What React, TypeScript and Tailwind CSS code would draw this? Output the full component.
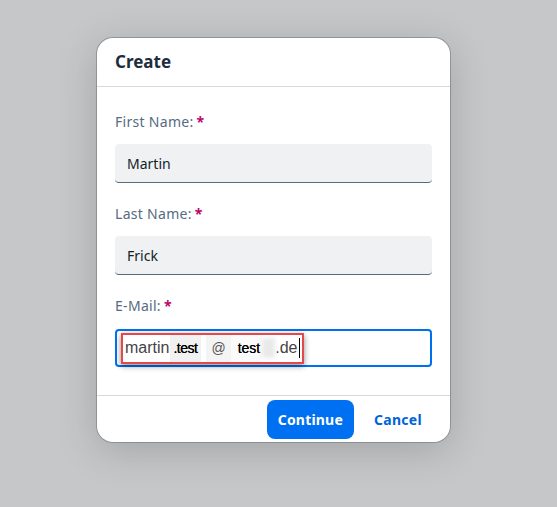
const Field = ({ label, value }: { label: string; value: string }) => (
  <div className="flex flex-col">
    <label className="h-[20px] text-[14px] leading-[20px] tracking-[0.3px] text-[#556b82]">
      {label}
      <span className="ml-[3px] align-top text-[14px] font-bold text-[#ba066c]">*</span>
    </label>
    <div className="mt-[12px] flex h-[39px] items-center rounded-[4px] border-b border-[#556b82] bg-[#eff1f2] px-[12px] text-[14px] text-[#131e29]">
      {value}
    </div>
  </div>
);

const App = () => {
  return (
    <div className="min-h-[507px] w-full bg-[#c6c7c9] pt-[38px] pl-[97px]" style={{ fontFamily: '"Noto Sans", Lato, sans-serif' }}>
      <div className="w-[353px] overflow-hidden rounded-[16px] bg-white shadow-[0_0_0_1px_rgba(70,80,90,0.35),0_8px_40px_rgba(0,0,0,0.18)]">
        {/* Kopf */}
        <header className="flex h-[49px] items-center border-b border-[#d9d9d9] px-[18px]">
          <h1 className="text-[17px] font-bold text-[#1d2d3e]">Create</h1>
        </header>

        {/* Formular */}
        <section className="flex flex-col gap-[21px] px-[18px] pt-[25px] pb-[28px]">
          <Field label="First Name:" value="Martin" />
          <Field label="Last Name:" value="Frick" />

          <div className="flex flex-col">
            <label className="h-[20px] text-[14px] leading-[20px] tracking-[0.3px] text-[#556b82]">
              E-Mail:
              <span className="ml-[3px] align-top text-[14px] font-bold text-[#ba066c]">*</span>
            </label>
            <div className="mt-[13px] flex h-[38px] items-center rounded-[4px] border-2 border-[#0070f2] bg-white pl-[4px]">
              <div
                className="flex h-[31px] items-center border-2 border-[#e5484b] bg-white pl-[2px] pr-[2px] text-[#333] shadow-[0_2px_6px_rgba(0,0,0,0.45)]"
                style={{ fontFamily: '"Liberation Sans", Arial, sans-serif' }}
              >
                <span className="text-[16px] text-[#444]">martin</span>
                <span className="ml-[1px] flex h-full items-center bg-[#f1f1f1] pl-[3px] pr-[4px] text-[14px] tracking-[-0.5px] text-black [text-shadow:0_0_0.6px_#000]">.test</span>
                <span className="ml-[5px] flex h-full items-center bg-[#f4f4f4] px-[5px] text-[14px] text-[#555]">@</span>
                <span className="flex h-full items-center bg-[#fbfbfb] pl-[7px] pr-[2px] text-[14px] text-black [text-shadow:0_0_0.6px_#000]">test</span>
                <span className="h-[20px] w-[13px] bg-[#e9e9e9] blur-[2px]" />
                <span className="text-[16px] text-[#444]">.de</span>
                <span className="ml-[2px] h-[20px] w-[1px] bg-black" />
              </div>
            </div>
          </div>
        </section>

        {/* Fuß */}
        <footer className="flex h-[47px] items-center justify-end gap-[4px] border-t border-[#d9d9d9] px-[12px]">
          <button className="h-[39px] rounded-[8px] bg-[#0070f2] px-[11px] text-[14px] font-bold tracking-[0.2px] text-white">Continue</button>
          <button className="h-[39px] rounded-[8px] px-[16px] text-[14px] font-bold tracking-[0.3px] text-[#0064d9]">Cancel</button>
        </footer>
      </div>
    </div>
  );
};

export default App;
